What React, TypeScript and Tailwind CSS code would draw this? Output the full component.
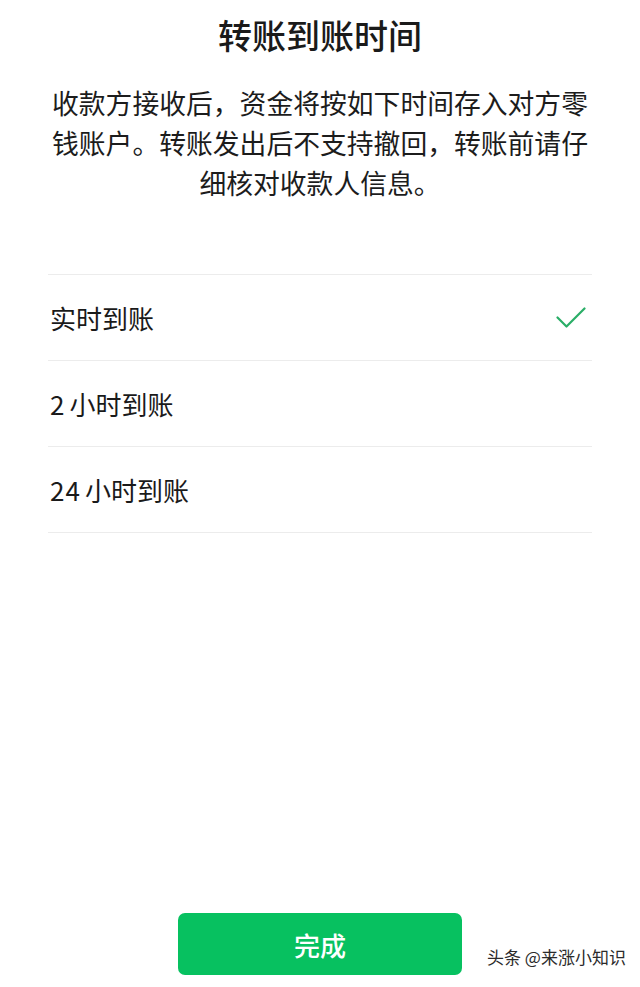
import React from 'react';

const options = [
    { id: 'realtime', num: '', label: '实时到账', checked: true },
    { id: '2h', num: '2', label: '小时到账', checked: false },
    { id: '24h', num: '24', label: '小时到账', checked: false },
];

const CheckMark = () => (
    <svg width="30" height="24" viewBox="0 0 30 24" fill="none" className="text-[#2aae67]">
        <path d="M1.5 11.5 L10.5 20.5 L28.5 2.5" stroke="currentColor" strokeWidth="2.2" strokeLinecap="round" strokeLinejoin="round" />
    </svg>
);

const App: React.FC = () => {
    return (
        <div
            className="relative w-[640px] h-[987px] bg-white flex flex-col text-[#1a1a1a]"
            style={{ fontFamily: '"Noto Sans CJK SC", "Noto Sans", sans-serif' }}
        >
            <h1 className="mt-[15px] text-center text-[34px] leading-[40px] font-medium">转账到账时间</h1>

            <p className="mt-[28px] mx-auto w-[600px] text-center text-[26.8px] leading-[40px] text-[#1c1c1c]">
                收款方接收后，资金将按如下时间存入对方零
                <br />
                钱账户。转账发出后不支持撤回，转账前请仔
                <br />
                细核对收款人信息。
            </p>

            <ul className="mt-[71px] mx-[48px] border-t border-[#ececec]">
                {options.map(o => (
                    <li key={o.id} className="h-[86px] flex items-center justify-between border-b border-[#ececec] pl-[2px] pr-[6px]">
                        <span className="text-[26px] leading-none">
                            {o.num && <span className="tracking-[1px] mr-[4px]">{o.num}</span>}
                            {o.label}
                        </span>
                        {o.checked && <CheckMark />}
                    </li>
                ))}
            </ul>

            <div className="flex-1" />

            <div className="flex justify-center mb-[12px]">
                <button className="w-[284px] h-[62px] rounded-[7px] bg-[#07c160] text-white text-[26px] font-medium">
                    完成
                </button>
            </div>

            {/* watermark */}
            <div className="absolute left-[487px] top-[946px] text-[17px] leading-[22px] text-[#2b2b2b] whitespace-nowrap">
                头条 @来涨小知识
            </div>
        </div>
    );
};

export default App;
